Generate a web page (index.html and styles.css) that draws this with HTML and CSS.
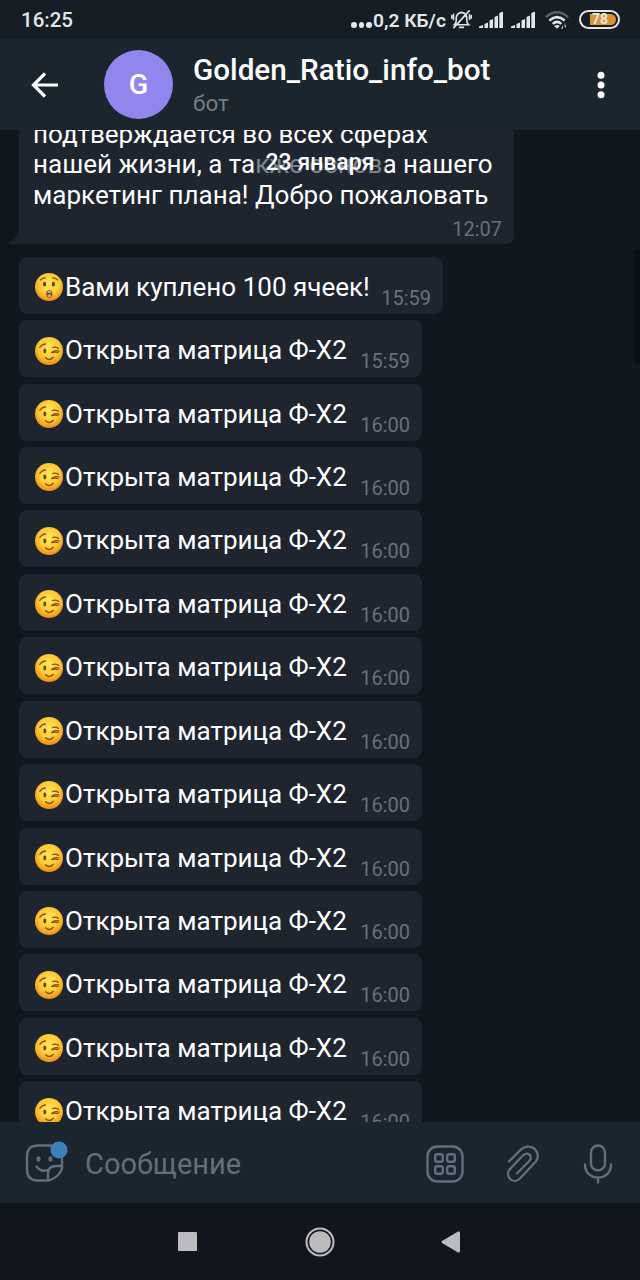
FILE: index.html
```html
<!DOCTYPE html>
<html lang="ru">
<head>
<meta charset="utf-8">
<title>Golden_Ratio_info_bot</title>
<link rel="stylesheet" href="styles.css">
</head>
<body>
<svg class="defs" width="0" height="0">
  <defs>
    <radialGradient id="face" cx=".5" cy=".4" r=".6">
      <stop offset="0" stop-color="#ffe65c"/><stop offset=".6" stop-color="#fdcb35"/><stop offset="1" stop-color="#ee8c12"/>
    </radialGradient>
    <symbol id="wink" viewBox="0 0 28 28">
      <circle cx="14" cy="14" r="14" fill="url(#face)"/>
      <ellipse cx="9.8" cy="14" rx="1.5" ry="2.4" fill="#704014"/>
      <path d="M4.8 10.4Q7 7.2 10.4 7M17.5 10.5Q20.5 9.4 23.5 11.4M16.6 15.4Q20 12.8 24 14.2M17 15.5Q20.5 14.6 23 15.6M10.5 20.8Q14.5 24.4 18.3 20.2" fill="none" stroke="#8a4d12" stroke-width="1.3" stroke-linecap="round"/>
    </symbol>
    <symbol id="wow" viewBox="0 0 28 28">
      <circle cx="14" cy="14" r="14" fill="url(#face)"/>
      <ellipse cx="9.6" cy="11.2" rx="1.5" ry="2.4" fill="#704014"/>
      <ellipse cx="18.4" cy="11.2" rx="1.5" ry="2.4" fill="#704014"/>
      <path d="M5.5 7Q7.8 4.6 10.4 4.8M17.6 4.8Q20.4 4.6 22.5 7" fill="none" stroke="#8a4d12" stroke-width="1.2" stroke-linecap="round"/>
      <ellipse cx="14.3" cy="21" rx="3.1" ry="3.8" fill="#7a4420"/>
      <path d="M12 19.5Q14.3 16.8 16.6 19.5Z" fill="#fff"/><ellipse cx="14.3" cy="22.8" rx="2" ry="1.5" fill="#e8a088"/>
    </symbol>
    <symbol id="bars" viewBox="0 0 24 18">
      <path d="M0 17V15.500L4 14V17ZM5.500 17V13L9 11.500V17ZM10.500 17V9.500L14 8V17ZM15.500 17V6L19 4.500V17ZM20.300 17V2L24 .5V17Z" fill="#e2e6e9"/>
    </symbol>
  </defs>
</svg>
<main class="phone">
  <div class="status">
    <span class="clock">16:25</span>
    <span class="net"><span class="dots"><i></i><i></i><i></i></span>0,2 КБ/с</span>
    <svg class="mute" viewBox="0 0 22 22" fill="none" stroke="#e2e6e9" stroke-width="1.7" stroke-linecap="round"><path d="M3.500 16.500H18.500Q16.500 14.500 16.500 12V9Q16 4.500 11 3.500Q6 4.500 5.500 9V12Q5.500 14.500 3.500 16.500ZM9 19.300H13M19 2L3 19.500M2.600 5.500V11M.7 7V9.500M19.400 6V11M21.300 7V9.500"/></svg>
    <svg class="signal" viewBox="0 0 24 18"><use href="#bars"/></svg>
    <svg class="signal second" viewBox="0 0 24 18"><use href="#bars"/></svg>
    <svg class="wifi" viewBox="0 0 26 20" fill="none" stroke-width="2.600"><path d="M1 7Q12.500-3 24 7" stroke="#59636b"/><path d="M4.500 10.500Q12.500 3.500 20.500 10.500M8 14Q12.500 10 17 14" stroke="#e2e6e9"/><path d="M9.500 16.200Q12.500 14 15.500 16.200L12.500 19ZM18.500 15V19H17ZM20.500 12.500V17.500H22Z" fill="#e2e6e9"/></svg>
    <span class="battery"><span>78</span></span>
  </div>
  <header class="header">
    <svg class="back" viewBox="0 0 28 28" fill="none" stroke="#fff" stroke-width="3.200"><path d="M27 14H3M14 2.500L2.500 14L14 25.500"/></svg>
    <div class="avatar">G</div>
    <div class="title"><h1>Golden_Ratio_info_bot</h1><p>бот</p></div>
    <svg class="more" viewBox="0 0 8 28" fill="#fff"><circle cx="4" cy="4.200" r="3.500"/><circle cx="4" cy="14" r="3.500"/><circle cx="4" cy="23.700" r="3.500"/></svg>
  </header>
  <section class="chat">
    <article class="long">
      <svg class="tail" viewBox="0 0 12 16"><path d="M10 0Q10 10 0 14.500V16H12V0Z" fill="#1e252f"/></svg>
      <p>подтверждается во всех сферах</p><p>нашей жизни, а также основа нашего</p><p>маркетинг плана! Добро пожаловать</p>
      <time>12:07</time>
    </article>
    <article class="msg bought"><svg class="emoji"><use href="#wow"/></svg><p>Вами куплено 100 ячеек!</p><time>15:59</time></article>
    <article class="msg"><svg class="emoji"><use href="#wink"/></svg><p>Открыта матрица Ф-Х2</p><time>15:59</time></article>
    <article class="msg"><svg class="emoji"><use href="#wink"/></svg><p>Открыта матрица Ф-Х2</p><time>16:00</time></article>
    <article class="msg"><svg class="emoji"><use href="#wink"/></svg><p>Открыта матрица Ф-Х2</p><time>16:00</time></article>
    <article class="msg"><svg class="emoji"><use href="#wink"/></svg><p>Открыта матрица Ф-Х2</p><time>16:00</time></article>
    <article class="msg"><svg class="emoji"><use href="#wink"/></svg><p>Открыта матрица Ф-Х2</p><time>16:00</time></article>
    <article class="msg"><svg class="emoji"><use href="#wink"/></svg><p>Открыта матрица Ф-Х2</p><time>16:00</time></article>
    <article class="msg"><svg class="emoji"><use href="#wink"/></svg><p>Открыта матрица Ф-Х2</p><time>16:00</time></article>
    <article class="msg"><svg class="emoji"><use href="#wink"/></svg><p>Открыта матрица Ф-Х2</p><time>16:00</time></article>
    <article class="msg"><svg class="emoji"><use href="#wink"/></svg><p>Открыта матрица Ф-Х2</p><time>16:00</time></article>
    <article class="msg"><svg class="emoji"><use href="#wink"/></svg><p>Открыта матрица Ф-Х2</p><time>16:00</time></article>
    <article class="msg"><svg class="emoji"><use href="#wink"/></svg><p>Открыта матрица Ф-Х2</p><time>16:00</time></article>
    <article class="msg"><svg class="emoji"><use href="#wink"/></svg><p>Открыта матрица Ф-Х2</p><time>16:00</time></article>
    <article class="msg"><svg class="emoji"><use href="#wink"/></svg><p>Открыта матрица Ф-Х2</p><time>16:00</time></article>
    <div class="date">23 января</div>
    <div class="scrollbar"></div>
  </section>
  <footer class="composer">
    <svg class="sticker" viewBox="0 0 44 44" fill="none" stroke="#616f7e" stroke-width="2.400" stroke-linecap="round"><path d="M38 20V26Q37 30 35 32Q29 38 24 38.500H14Q3 38.500 3 27.500V14Q3 3.500 14 3.500H27Q38 3.500 38 14V20M24 38V32Q24 24 32 24H38M12.500 24.500Q17 30.500 23.500 28"/><ellipse cx="14.500" cy="17" rx="1.300" ry="2" fill="#616f7e" stroke-width="1.500"/><ellipse cx="26.500" cy="17" rx="1.300" ry="2" fill="#616f7e" stroke-width="1.500"/><circle cx="35" cy="8" r="8.500" fill="#3c82ba" stroke="none"/></svg>
    <span class="placeholder">Сообщение</span>
    <svg class="grid" viewBox="0 0 38 38" fill="none" stroke="#616f7e" stroke-width="2.400"><rect x="1.500" y="1.500" width="35" height="35" rx="10"/><rect x="9.200" y="9.200" width="7.600" height="7.600" rx="2"/><rect x="21.200" y="9.200" width="7.600" height="7.600" rx="2"/><rect x="9.200" y="21.200" width="7.600" height="7.600" rx="2"/><rect x="21.200" y="21.200" width="7.600" height="7.600" rx="2"/></svg>
    <svg class="clip" viewBox="0 0 34 38" fill="none" stroke="#616f7e" stroke-width="2.300" stroke-linecap="round"><path d="M3 16.500L14.500 5Q18 1.500 22.500 1.600C30 2 34.500 10 29.800 16.500L14 33.500C7.500 40 -1.500 32 3.500 24.500L17 10.500C21.500 6 27.500 11 23.500 15.800L11 28.500"/></svg>
    <svg class="mic" viewBox="0 0 30 40" fill="none" stroke="#616f7e" stroke-width="2.400" stroke-linecap="round"><rect x="8" y="1.500" width="14" height="25" rx="7"/><path d="M2 20.500C2 38 28 38 28 20.500M15 33.500V38.500"/></svg>
  </footer>
  <nav class="nav">
    <svg class="square" viewBox="0 0 19 19"><rect width="19" height="19" rx="1" fill="#bcbcbe"/></svg>
    <svg class="home" viewBox="0 0 30 30"><circle cx="15" cy="15" r="13.500" fill="none" stroke="#c0c0c2" stroke-width="2"/><circle cx="15" cy="15" r="10.800" fill="#bcbcbe"/></svg>
    <svg class="prev" viewBox="0 0 19 22"><path d="M1 10Q0 11 1 12L17 21.500Q19 22 19 20V2Q19 0 17 .5Z" fill="#bcbcbe"/></svg>
  </nav>
</main>
</body>
</html>
```

FILE: styles.css
```css
* { box-sizing: border-box; margin: 0; }
body { background: #10171f; font-family: Roboto, "Noto Sans", sans-serif; color: #fff; }
svg { display: block; flex: none; }
p, time, h1, span { white-space: nowrap; }
.defs { position: absolute; }
.phone { width: 640px; height: 1280px; display: flex; flex-direction: column; overflow: hidden; }
.status { height: 39px; flex: none; background: #161e25; display: flex; align-items: center; padding-left: 21px; color: #e2e6e9; font-weight: 500; font-size: 20px; }
.clock { width: 330px; font-size: 20.5px; }
.net { width: 100px; display: flex; font-size: 19.200px; font-weight: 600; padding-top: 1px; }
.dots { display: flex; gap: 2px; align-items: flex-end; padding-bottom: 4px; margin-right: 1.500px; }
.dots i { width: 5.500px; height: 5.500px; border-radius: 50%; background: #e2e6e9; }
.mute { width: 21px; height: 21px; }
.signal { width: 24px; height: 18px; margin-left: 7px; }
.signal.second { margin-left: 8px; }
.wifi { width: 25px; height: 20px; margin-left: 10px; }
.battery { width: 41px; height: 19px; margin-left: 9px; padding: 2px; border: 2px solid #e2e6e9; border-radius: 10px; }
.battery span { display: block; height: 11px; margin-left: 7px; line-height: 11.500px; font-size: 14px; font-weight: 700; border-radius: 0 6px 6px 0; background: #dd9430; padding-left: 2px; }
.header { height: 91px; flex: none; background: #1b252e; display: flex; align-items: center; padding-left: 31px; }
.back { width: 28px; height: 28px; }
.avatar { width: 69px; height: 69px; margin-left: 45px; border-radius: 50%; background: #9186ed; display: flex; align-items: center; justify-content: center; font-size: 28.500px; font-weight: 500; }
.title { width: 404px; margin-left: 20px; padding-top: 1px; }
.title h1 { font-size: 29.700px; line-height: 34px; font-weight: 500; }
.title p { font-size: 22.500px; line-height: 28px; margin-top: 2px; color: #737d86; }
.more { width: 8px; height: 28px; }
.chat { position: relative; height: 992px; flex: none; overflow: hidden; display: flex; flex-direction: column; align-items: flex-start; gap: 6.430px; padding-left: 19px; background: #10171f; }
.long { position: relative; flex: none; width: 495px; height: 114px; margin-bottom: 6.300px; display: flex; flex-direction: column; justify-content: flex-end; padding: 0 12px 3px 14px; background: #1e252f; border-radius: 0 0 8px 0; font-size: 26.030px; line-height: 30.600px; }
.long time { align-self: flex-end; line-height: 24px; margin-top: 6.500px; }
.tail { position: absolute; left: -10px; bottom: 0; width: 12px; height: 16px; }
time { font-size: 20px; color: #67717b; }
.msg { flex: none; width: 403px; height: 57px; display: flex; align-items: flex-start; padding: 14px 12px 0 16px; background: #1e252f; border-radius: 8px; font-size: 26.030px; line-height: 32px; }
.msg.bought { width: 424px; }
.emoji { width: 28px; height: 28px; margin: 2.500px 2px 0 0; }
.msg time { margin-left: auto; padding-top: 11px; }
.date { position: absolute; left: 254px; top: 16px; width: 132px; height: 35px; border-radius: 18px; background: rgba(31,42,52,.58); text-align: center; font-size: 23px; line-height: 33px; font-weight: 500; }
.scrollbar { position: absolute; right: 0; top: 120px; width: 6px; height: 114px; background: #0b1016; }
.composer { height: 81px; flex: none; background: #1b252e; display: flex; align-items: center; padding: 3px 0 0 24px; }
.sticker { width: 44px; height: 44px; overflow: visible; }
.placeholder { width: 341px; margin-left: 17px; font-size: 29px; color: #616f7e; }
.grid { width: 38px; height: 38px; }
.clip { width: 34px; height: 38px; margin-left: 42px; }
.mic { width: 30px; height: 40px; margin-left: 43px; }
.nav { height: 77px; flex: none; background: #11161e; display: flex; align-items: center; padding-left: 178px; }
.square { width: 19px; height: 19px; }
.home { width: 30px; height: 30px; margin-left: 108px; }
.prev { width: 19px; height: 22px; margin-left: 106px; }
```
